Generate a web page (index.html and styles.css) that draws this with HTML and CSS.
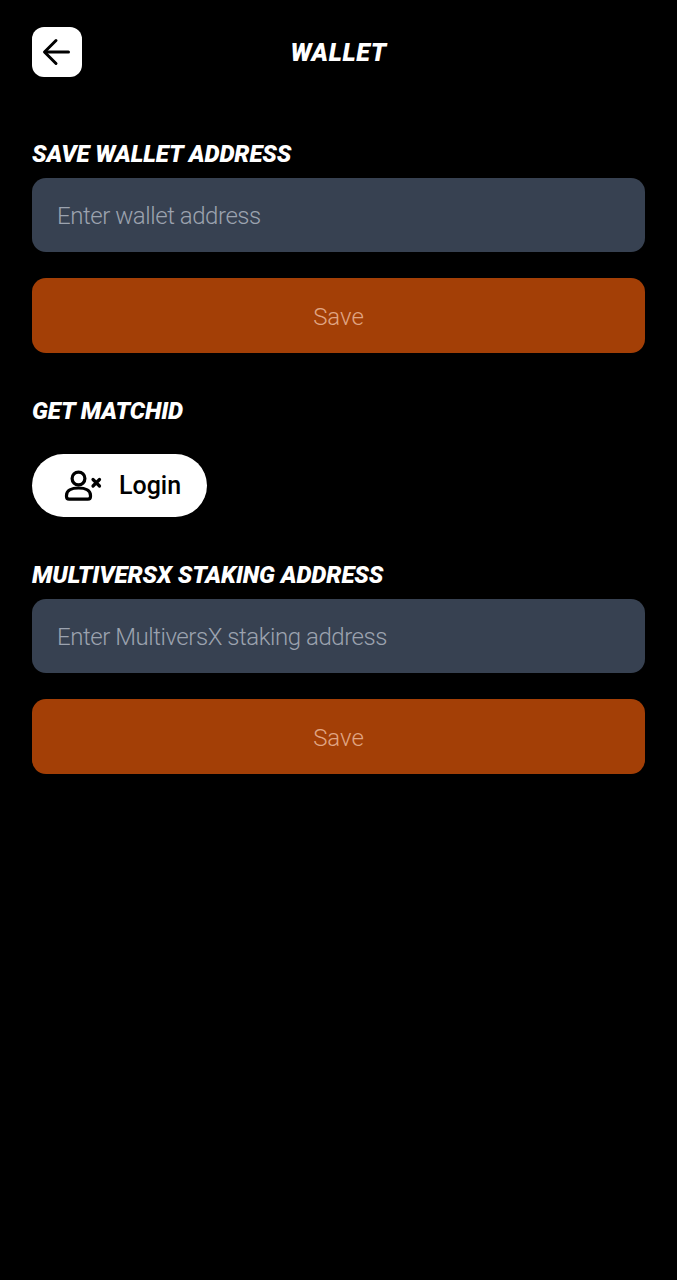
FILE: index.html
```html
<!DOCTYPE html>
<html lang="en">
<head>
    <meta charset="UTF-8">
    <meta name="viewport" content="width=device-width, initial-scale=1.0">
    <title>Wallet</title>
    <link rel="stylesheet" href="styles.css">
</head>
<body>

<header class="top-bar">
    <button class="back-btn" aria-label="Back">
        <svg width="30" height="30" viewBox="0 0 30 30" fill="none" stroke="#000" stroke-width="3" stroke-linecap="round" stroke-linejoin="round">
            <path d="M26.500 15H3.500"/>
            <path d="M14 3.500L2.500 15 14 26.500"/>
        </svg>
    </button>
    <h1>WALLET</h1>
</header>

<main class="container">
    <section class="block">
        <h2>SAVE WALLET ADDRESS</h2>
        <input class="field" type="text" placeholder="Enter wallet address">
        <button class="btn-save">Save</button>
    </section>

    <section class="block">
        <h2>GET MATCHID</h2>
        <button class="btn-login">
            <svg width="38" height="32" viewBox="0 0 38 32" fill="none" stroke="#000" stroke-width="3.200" stroke-linecap="round" stroke-linejoin="round">
                <circle cx="14.500" cy="8.500" r="6.400"/>
                <path d="M2.500 25.500c0-5 5-7.500 12-7.500s12 2.500 12 7.500v1c0 1.600-1 2.600-2.600 2.600H5.100c-1.600 0-2.600-1-2.600-2.600z"/>
                <path d="M29 9.500l6.500 6.500M35.500 9.500L29 16"/>
            </svg>
            <span>Login</span>
        </button>
    </section>

    <section class="block">
        <h2>MULTIVERSX STAKING ADDRESS</h2>
        <input class="field" type="text" placeholder="Enter MultiversX staking address">
        <button class="btn-save">Save</button>
    </section>
</main>

</body>
</html>
```

FILE: styles.css
```css
* {
    box-sizing: border-box;
}

body {
    font-family: Roboto, "Liberation Sans", sans-serif;
    margin: 0;
    padding: 0;
    min-height: 1280px;
    background-color: #000;
    color: #fff;
}

.top-bar {
    position: relative;
    display: flex;
    align-items: center;
    padding: 27px 32px 0;
}

.back-btn {
    display: flex;
    align-items: center;
    justify-content: center;
    width: 50px;
    height: 50px;
    padding: 0;
    border: none;
    border-radius: 12px;
    background-color: #fff;
}

.top-bar h1 {
    position: absolute;
    left: 0;
    right: 0;
    top: 39px;
    margin: 0;
    font-size: 25px;
    line-height: 28px;
    font-weight: 900;
    font-style: italic;
    letter-spacing: 0.6px;
    text-align: center;
}

.container {
    padding: 62px 32px 0;
}

.block {
    margin-bottom: 43px;
}

.block h2 {
    margin: 0 0 11px;
    padding-top: 1px;
    height: 28px;
    font-size: 24px;
    line-height: 28px;
    font-weight: 900;
    font-style: italic;
    letter-spacing: -0.1px;
}

.field {
    display: block;
    width: 100%;
    height: 74px;
    padding: 2px 25px 0;
    border: none;
    border-radius: 14px;
    background-color: #374151;
    color: #fff;
    font-family: inherit;
    font-size: 24px;
    font-weight: 300;
    letter-spacing: -0.45px;
}

.field::placeholder {
    color: #9ca3af;
    opacity: 1;
}

.btn-save {
    display: block;
    width: 100%;
    height: 75px;
    margin-top: 26px;
    padding: 2px 0 0;
    border: none;
    border-radius: 14px;
    background-color: #a33f06;
    color: #e0a583;
    font-family: inherit;
    font-size: 24px;
    font-weight: 300;
}

.btn-login {
    display: flex;
    align-items: center;
    gap: 17px;
    width: 175px;
    height: 63px;
    margin-top: 30px;
    padding: 0 0 0 32px;
    border: none;
    border-radius: 32px;
    background-color: #fff;
    color: #000;
    font-family: inherit;
    font-size: 25px;
    font-weight: 500;
}
```
